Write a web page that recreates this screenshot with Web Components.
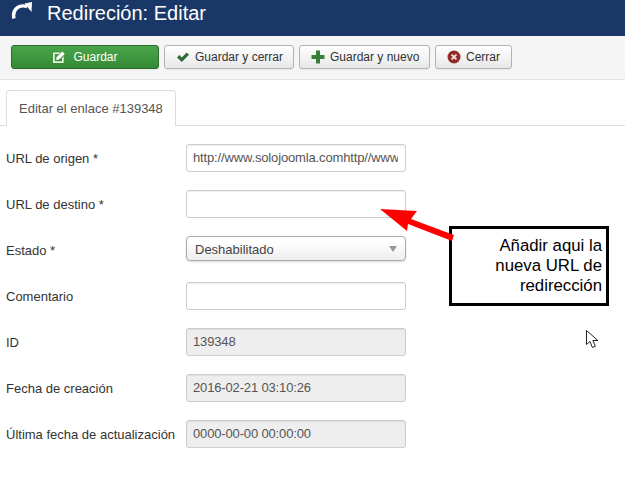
<!DOCTYPE html>
<html lang="es">
<head>
<meta charset="utf-8">
<title>Redireción: Editar</title>
<style>
  html, body { margin: 0; padding: 0; background: #fff; }
  body { font-family: "Liberation Sans", Arial, sans-serif; position: relative; height: 504px; overflow: hidden; }
</style>
</head>
<body>
<page-header>Redireción: Editar</page-header>
<page-toolbar>
  <tool-button kind="primary" icon="edit">Guardar</tool-button>
  <tool-button icon="check" style="width:130px">Guardar y cerrar</tool-button>
  <tool-button icon="plus" style="width:131px">Guardar y nuevo</tool-button>
  <tool-button icon="close" style="width:77px">Cerrar</tool-button>
</page-toolbar>
<tab-bar>Editar el enlace #139348</tab-bar>
<edit-form>
  <form-row label="URL de origen *"><text-field>http://www.solojoomla.comhttp//www.solojoomla.com</text-field></form-row>
  <form-row label="URL de destino *"><text-field></text-field></form-row>
  <form-row label="Estado *"><select-field>Deshabilitado</select-field></form-row>
  <form-row label="Comentario"><text-field></text-field></form-row>
  <form-row label="ID"><text-field disabled>139348</text-field></form-row>
  <form-row label="Fecha de creación"><text-field disabled>2016-02-21 03:10:26</text-field></form-row>
  <form-row label="Última fecha de actualización"><text-field disabled>0000-00-00 00:00:00</text-field></form-row>
</edit-form>
<note-callout>Añadir aqui la<br>nueva URL de<br>redirección</note-callout>
<mouse-cursor></mouse-cursor>

<script>
// icons used in the toolbar buttons
const icons = {
  edit: `<svg width="14" height="14" viewBox="0 0 14 14"><path d="M1 2.5h7.5L7 4H2.7v7.3H10V8l1.7-1.7V13H1z" fill="#e9f5e4"/><path d="M4.6 7.2L10.3 1.5l2.4 2.4L7 9.6 4.2 10z" fill="#fff"/></svg>`,
  check: `<svg width="14" height="14" viewBox="0 0 14 14"><path d="M1 7.4l2.4-2.3 2.4 2.4L10.7 2.4 13 4.8 5.8 12z" fill="#2f6b34"/></svg>`,
  plus: `<svg width="14" height="14" viewBox="0 0 14 14"><path d="M5 .5h4V5h4.5v4H9v4.5H5V9H.5V5H5z" fill="#378137"/></svg>`,
  close: `<svg width="14" height="14" viewBox="0 0 14 14"><circle cx="7" cy="7" r="6.5" fill="#942a25"/><path d="M4.6 4.6l4.8 4.8M9.4 4.6L4.6 9.4" stroke="#f3dede" stroke-width="2"/></svg>`
}

class PageHeader extends HTMLElement {
  constructor() {
    super()
    this.attachShadow({ mode: 'open' }).innerHTML = `
      <style>
        :host { display: flex; align-items: flex-start; height: 36px; background: #1a3867; color: #fff; padding-left: 11px; box-sizing: border-box; }
        svg { display: block; margin: 2px 15px 0 0; }
        h1 { margin: 1px 0 0; font: normal 20px/24px "Liberation Sans", Arial, sans-serif; }
      </style>
      <svg width="21" height="17" viewBox="0 0 21 17">
        <path d="M3 16.5C1 8.5 7 2 16 4.5" fill="none" stroke="#fff" stroke-width="3.4"/>
        <path d="M13.5 1.5L21 0l-.5 10z" fill="#fff"/>
      </svg>
      <h1><slot></slot></h1>`
  }
}

class PageToolbar extends HTMLElement {
  constructor() {
    super()
    this.attachShadow({ mode: 'open' }).innerHTML = `
      <style>
        :host { display: flex; gap: 5px; height: 44px; box-sizing: border-box; padding: 9px 11px 0; background: #f5f5f5; border-bottom: 1px solid #e3e3e3; }
      </style>
      <slot></slot>`
  }
}

class ToolButton extends HTMLElement {
  constructor() {
    super()
    const icon = icons[this.getAttribute('icon')]
    this.attachShadow({ mode: 'open' }).innerHTML = `
      <style>
        :host { display: flex; align-items: center; flex: none; height: 24px; box-sizing: border-box; padding: 0 0 0 11px; font-size: 12px; color: #333; white-space: nowrap;
          border: 1px solid #b3b3b3; border-radius: 3px; background: linear-gradient(#fff, #e8e8e8); box-shadow: 0 1px 1px rgba(0,0,0,.05); }
        :host([kind="primary"]) { width: 148px; justify-content: center; color: #fff; border-color: #2a6a2a; background: linear-gradient(#4aa54a, #348a34); padding: 0 12px; }
        svg { display: block; }
        .icon { display: flex; margin-right: 5px; }
        :host([kind="primary"]) .icon { margin-right: 7px; }
      </style>
      <span class="icon">${icon}</span><slot></slot>`
  }
}

class TabBar extends HTMLElement {
  constructor() {
    super()
    this.attachShadow({ mode: 'open' }).innerHTML = `
      <style>
        :host { display: flex; height: 46px; box-sizing: border-box; padding: 10px 0 0 6px; border-bottom: 1px solid #ddd; }
        .tab { height: 36px; box-sizing: border-box; padding: 0 12px; line-height: 36px; font-size: 13px; color: #555; background: #fff; border: 1px solid #ddd; border-bottom: 0; border-radius: 4px 4px 0 0; }
      </style>
      <div class="tab"><slot></slot></div>`
  }
}

class EditForm extends HTMLElement {
  constructor() {
    super()
    this.attachShadow({ mode: 'open' }).innerHTML = `
      <style>
        :host { display: block; padding: 18px 0 0 6px; }
      </style>
      <slot></slot>`
  }
}

class FormRow extends HTMLElement {
  constructor() {
    super()
    this.attachShadow({ mode: 'open' }).innerHTML = `
      <style>
        :host { display: flex; align-items: flex-start; height: 46px; font-size: 13px; color: #333; }
        label { width: 180px; flex: none; line-height: 30px; white-space: nowrap; }
      </style>
      <label>${this.getAttribute('label')}</label><slot></slot>`
  }
}

class TextField extends HTMLElement {
  constructor() {
    super()
    this.attachShadow({ mode: 'open' }).innerHTML = `
      <style>
        :host { display: block; width: 220px; height: 28px; box-sizing: border-box; padding: 0 7px 0 6px; font-size: 13px; letter-spacing: -.15px; line-height: 26px; color: #555; background: #fff;
          border: 1px solid #ccc; border-radius: 3px; box-shadow: inset 0 1px 1px rgba(0,0,0,.07); }
        :host([disabled]) { background: #eee; }
        div { overflow: hidden; white-space: nowrap; height: 26px; }
      </style>
      <div><slot></slot></div>`
  }
}

class SelectField extends HTMLElement {
  constructor() {
    super()
    this.attachShadow({ mode: 'open' }).innerHTML = `
      <style>
        :host { display: flex; align-items: center; justify-content: space-between; width: 220px; height: 25px; box-sizing: border-box; padding: 0 8px; font-size: 13px; color: #444;
          border: 1px solid #aaa; border-radius: 4px; background: linear-gradient(#fff 20%, #eee); box-shadow: 0 1px 2px rgba(0,0,0,.15); }
        span { padding-top: 2px; }
        i { border: 4px solid transparent; border-top: 6px solid #999; border-bottom: 0; }
      </style>
      <span><slot></slot></span><i></i>`
  }
}

// the note and its arrow were drawn on top of the screenshot
class NoteCallout extends HTMLElement {
  constructor() {
    super()
    this.attachShadow({ mode: 'open' }).innerHTML = `
      <style>
        :host { position: absolute; left: 449px; top: 226px; width: 160px; height: 80px; box-sizing: border-box; padding: 7px 4px 0 0; background: #fff; border: 3px solid #000; font-size: 16.8px; line-height: 20px; color: #000; text-align: right; }
        svg { position: absolute; left: -74px; top: -23px; }
      </style>
      <svg width="76" height="45" viewBox="0 0 76 45"><polygon points="2,3 39,5 33,13 76,29 74,35 30,18 29,25" fill="#f00"/></svg>
      <slot></slot>`
  }
}

class MouseCursor extends HTMLElement {
  constructor() {
    super()
    this.attachShadow({ mode: 'open' }).innerHTML = `
      <style>
        :host { position: absolute; left: 586px; top: 330px; width: 13px; height: 20px; }
        svg { display: block; }
      </style>
      <svg width="13" height="20" viewBox="0 0 13 20"><path d="M.5.5v14l3.5-3 2.4 6 3-1.2-2.5-5.8h5z" fill="#fff" stroke="#222"/></svg>`
  }
}

customElements.define('page-header', PageHeader)
customElements.define('page-toolbar', PageToolbar)
customElements.define('tool-button', ToolButton)
customElements.define('tab-bar', TabBar)
customElements.define('edit-form', EditForm)
customElements.define('form-row', FormRow)
customElements.define('text-field', TextField)
customElements.define('select-field', SelectField)
customElements.define('note-callout', NoteCallout)
customElements.define('mouse-cursor', MouseCursor)
</script>
</body>
</html>
